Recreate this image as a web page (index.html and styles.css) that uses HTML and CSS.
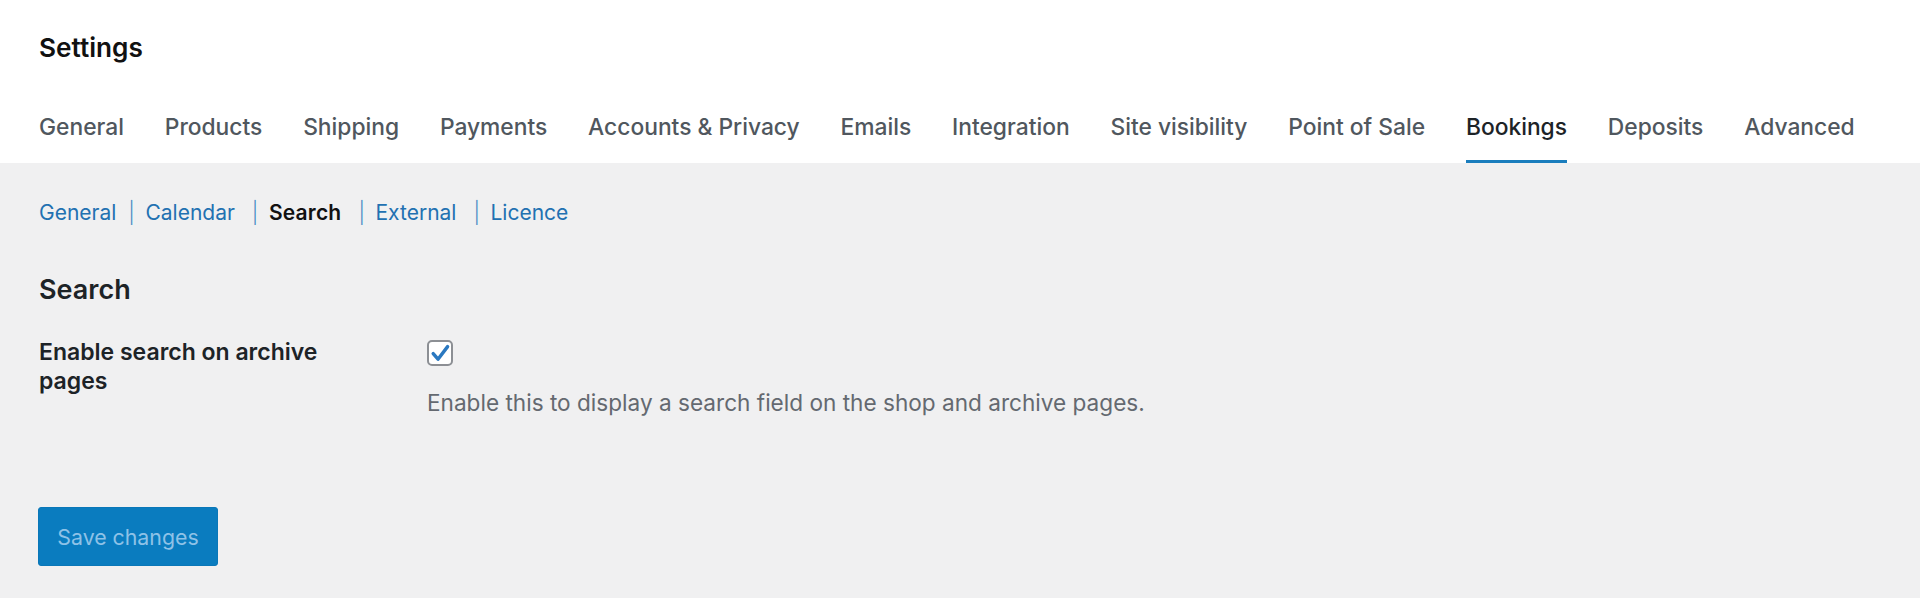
FILE: index.html
```html
<!DOCTYPE html>
<html lang="en">
<head>
<meta charset="utf-8">
<title>Settings</title>
<link rel="stylesheet" href="styles.css">
</head>
<body>
<header class="page-header">
  <h1 class="page-title">Settings</h1>
  <nav class="tabs">
    <a class="tab">General</a>
    <a class="tab">Products</a>
    <a class="tab">Shipping</a>
    <a class="tab">Payments</a>
    <a class="tab">Accounts &amp; Privacy</a>
    <a class="tab">Emails</a>
    <a class="tab">Integration</a>
    <a class="tab">Site visibility</a>
    <a class="tab">Point of Sale</a>
    <a class="tab tab-active">Bookings</a>
    <a class="tab">Deposits</a>
    <a class="tab">Advanced</a>
  </nav>
</header>
<main class="content">
  <ul class="subnav">
    <li class="subnav-item"><a class="subnav-link">General</a><span class="sep">|</span></li>
    <li class="subnav-item"><a class="subnav-link">Calendar</a><span class="sep sep-wide">|</span></li>
    <li class="subnav-item"><span class="subnav-current">Search</span><span class="sep sep-wide">|</span></li>
    <li class="subnav-item"><a class="subnav-link">External</a><span class="sep sep-wide">|</span></li>
    <li class="subnav-item"><a class="subnav-link">Licence</a></li>
  </ul>
  <h2 class="section-title">Search</h2>
  <div class="form-row">
    <div class="form-label">Enable search on archive pages</div>
    <div class="form-field">
      <span class="checkbox">
        <svg class="check" viewBox="0 0 26 26" width="26" height="26" aria-hidden="true">
          <path d="M6.2 13.6 L11 19.2 L20.6 6.6" fill="none" stroke="#2a78c0" stroke-width="3.4" stroke-linecap="round" stroke-linejoin="round"/>
        </svg>
      </span>
      <p class="description">Enable this to display a search field on the shop and archive pages.</p>
    </div>
  </div>
  <div class="actions">
    <button class="save-button" type="button">Save changes</button>
  </div>
</main>
</body>
</html>
```
FILE: styles.css
```css
* {
  box-sizing: border-box;
}

html, body {
  margin: 0;
  padding: 0;
}

body {
  background: #f0f0f1;
  font-family: "Inter", "Liberation Sans", Arial, sans-serif;
  color: #1d2327;
  height: 598px;
  overflow: hidden;
}

.page-header {
  background: #ffffff;
  padding: 32px 0 0 39px;
  height: 163px;
}

.page-title {
  margin: 0;
  font-size: 26.2px;
  line-height: 32px;
  font-weight: 600;
  color: #111111;
}

.tabs {
  display: flex;
  gap: 40.8px;
  margin-top: 48px;
}

.tab {
  display: block;
  font-size: 22.8px;
  line-height: 30px;
  font-weight: 500;
  color: #50575e;
  padding-bottom: 18px;
  border-bottom: 3px solid transparent;
  white-space: nowrap;
}

.tab-active {
  color: #1d2327;
  border-bottom-color: #1a7dbd;
}

.content {
  padding: 35px 0 0 39px;
}

.subnav {
  list-style: none;
  margin: 0;
  padding: 0;
  display: flex;
  font-size: 21px;
  line-height: 30px;
}

.subnav-item {
  display: flex;
}

.subnav-link {
  color: #2271b1;
}

.subnav-current {
  color: #111111;
  font-weight: 600;
  letter-spacing: 0.2px;
}

.sep {
  color: #4a8cc4;
  font-weight: 300;
  margin: 0 10.5px 0 12px;
}

.sep-wide {
  margin-left: 17px;
}

.section-title {
  margin: 45px 0 0;
  font-size: 27px;
  line-height: 34px;
  font-weight: 600;
  color: #1d2327;
}

.form-row {
  display: flex;
  margin-top: 31px;
}

.form-label {
  width: 388px;
  padding-right: 60px;
  font-size: 23px;
  line-height: 29px;
  font-weight: 600;
  color: #1d2327;
}

.form-field {
  display: flex;
  flex-direction: column;
  align-items: flex-start;
}

.checkbox {
  display: block;
  width: 26px;
  height: 26px;
  margin-top: 2px;
  border: 2px solid #8c8f94;
  border-radius: 5px;
  background: #ffffff;
  position: relative;
  overflow: hidden;
}

.check {
  position: absolute;
  left: -2px;
  top: -2px;
}

.description {
  margin: 22px 0 0;
  font-size: 22.6px;
  line-height: 29px;
  color: #646970;
}

.actions {
  margin-top: 90px;
}

.save-button {
  display: block;
  margin-left: -1px;
  width: 180px;
  height: 59px;
  background: #0a7cbf;
  border: 1px solid #0a77b8;
  border-radius: 3px;
  color: #8ec2e7;
  font-family: "Inter", "Liberation Sans", Arial, sans-serif;
  font-size: 21.3px;
  font-weight: 400;
  padding: 0;
}
```
